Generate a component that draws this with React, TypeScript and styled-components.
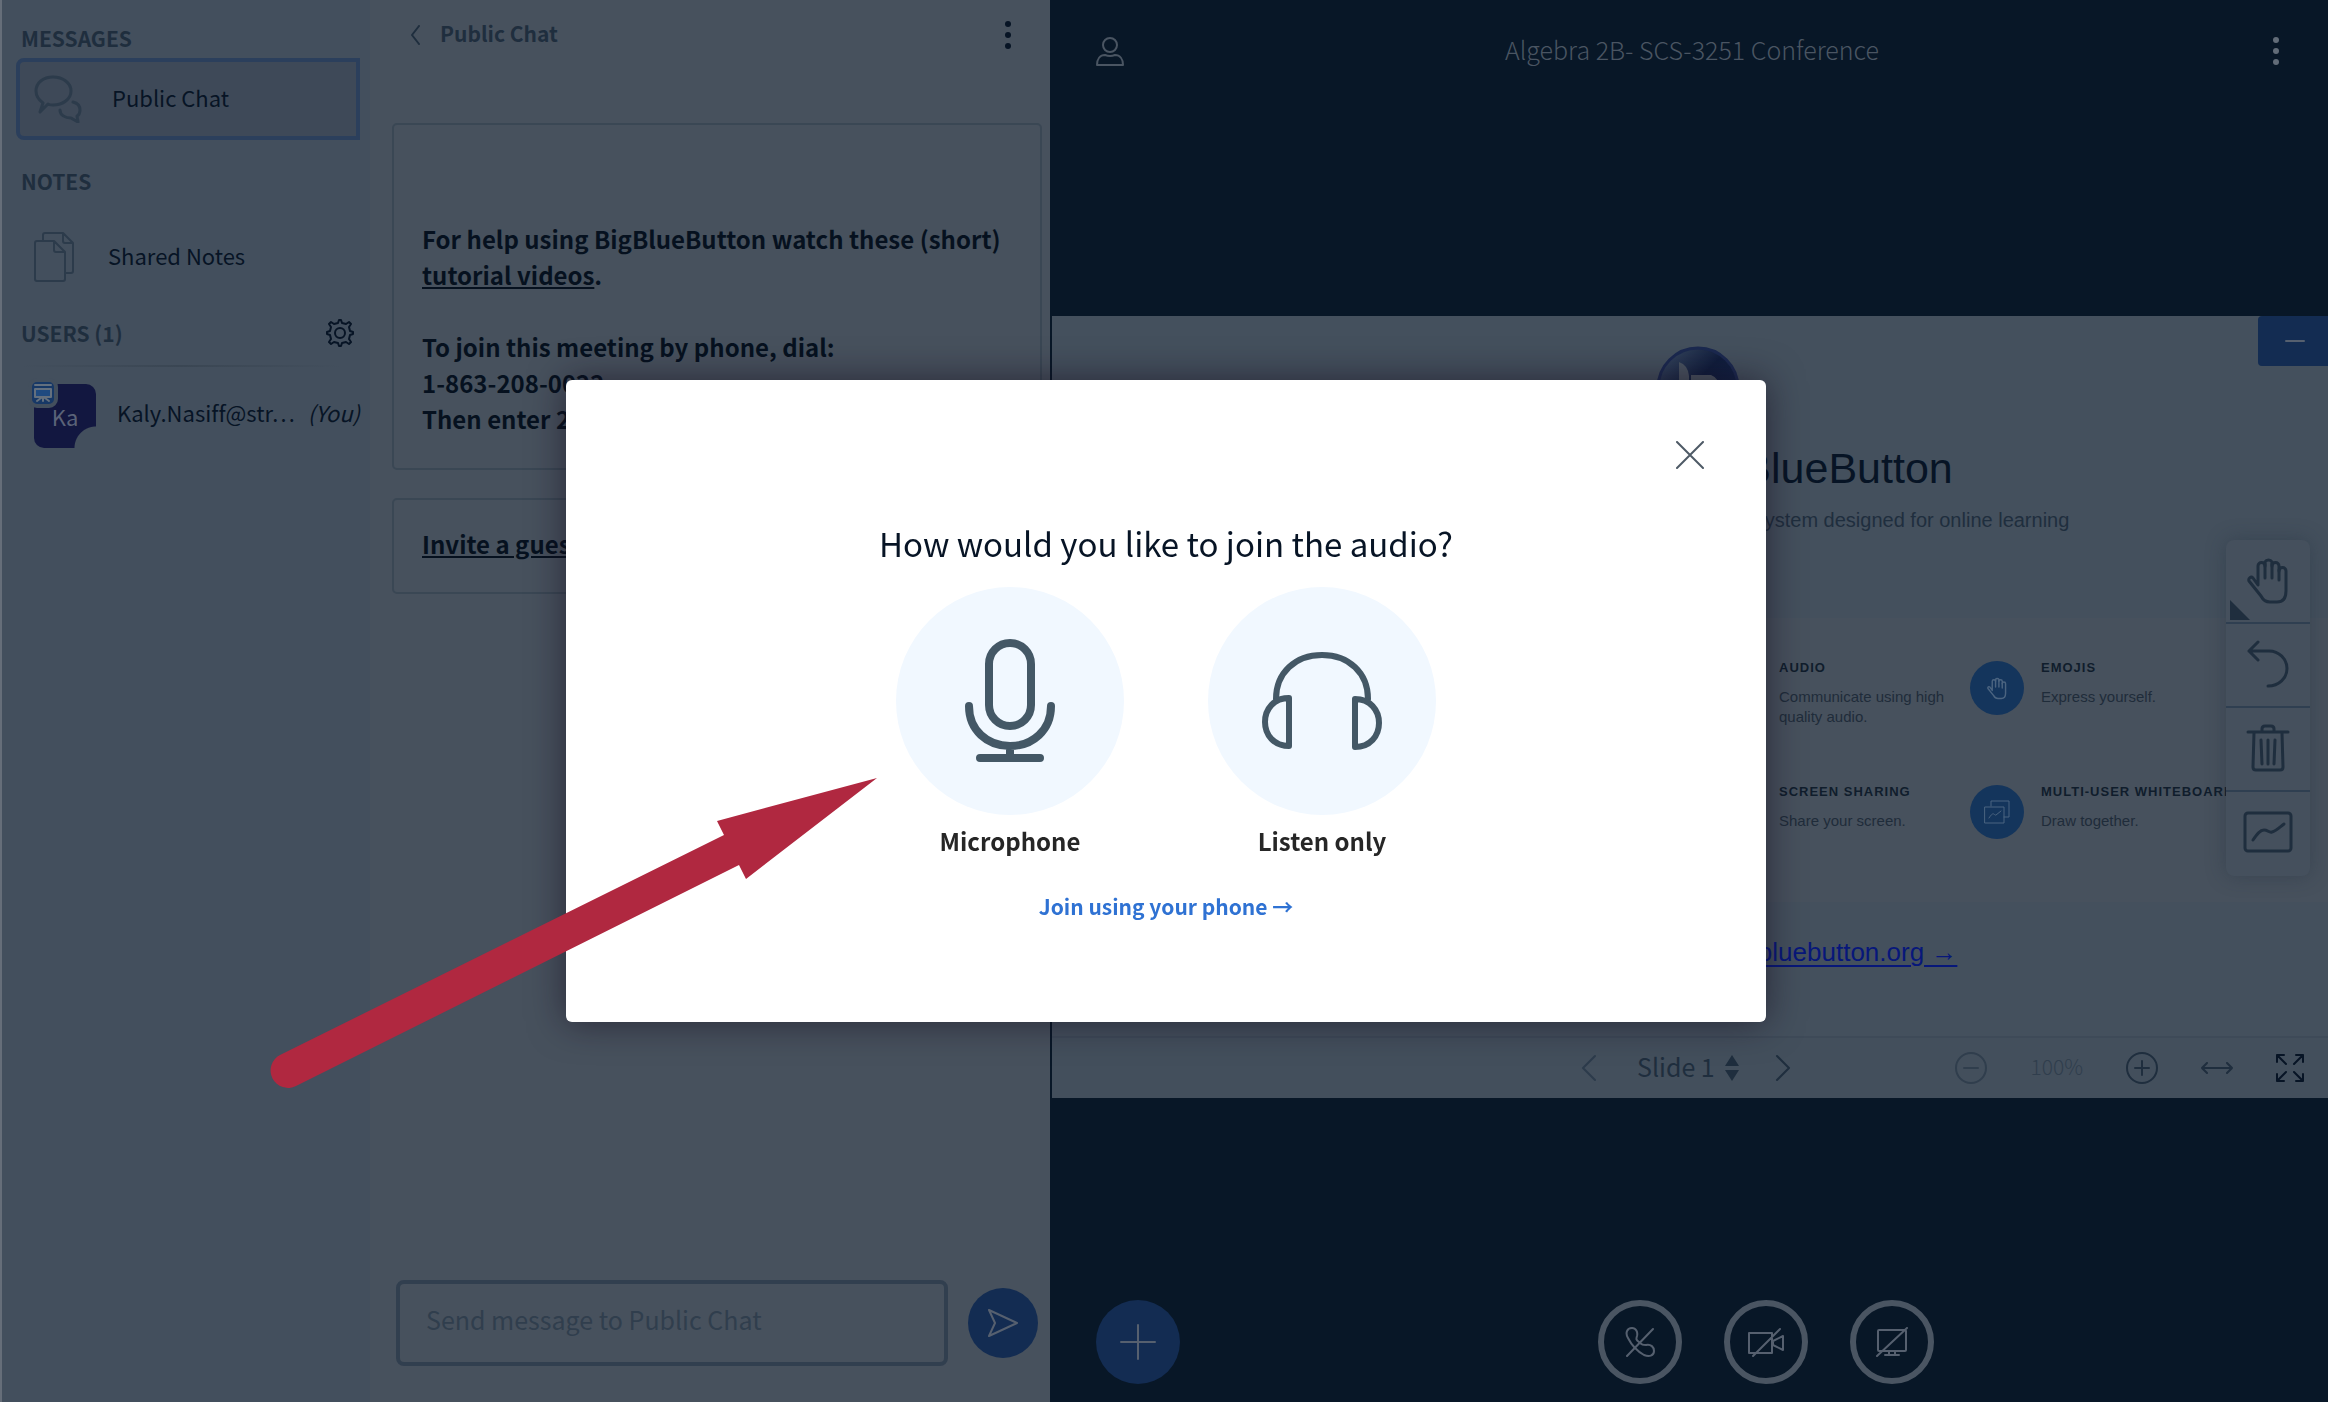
import React from "react";
import styled, { createGlobalStyle } from "styled-components";

const c = {
  dark: "#081727",
  panel: "#47515d",
  sidebar: "#434f5d",
  slide: "#44505d",
  heading: "#1f2e3e",
  ink: "#071425",
  line: "#3a4754",
  muted: "#2c3b4b",
  blue: "#132c52",
  light: "#4a5562",
};

const ui = `"Noto Sans CJK SC", "Noto Sans", sans-serif`;
const doc = `"Liberation Sans", Arial, sans-serif`;

const GlobalStyle = createGlobalStyle`
  *, *::before, *::after { box-sizing: border-box; }
  html, body { margin: 0; height: 100%; overflow: hidden; background: ${c.dark}; }
  #root { height: 100%; }
  button, input, select { font: inherit; color: inherit; }
  button { padding: 0; border: 0; background: none; cursor: pointer; }
  h1, h2, h3, p, ul { margin: 0; padding: 0; font-weight: inherit; font-size: inherit; }
  a { color: inherit; }
`;

const Layout = styled.div`
  display: flex;
  height: 100vh;
  font-family: ${ui};
  font-size: 22px;
  line-height: 28px;
  color: ${c.ink};
  background: ${c.dark};
`;

const Svg = styled.svg<{ $w: number; $h: number; $s?: number }>`
  display: block;
  flex: none;
  width: ${(p) => p.$w}px;
  height: ${(p) => p.$h}px;
  fill: none;
  stroke: currentColor;
  stroke-width: ${(p) => p.$s ?? 2};
  stroke-linecap: round;
  stroke-linejoin: round;
`;

type IconProps = { w: number; h: number; s?: number; children: React.ReactNode };
const Icon = ({ w, h, s, children }: IconProps) => (
  <Svg $w={w} $h={h} $s={s} viewBox={`0 0 ${w} ${h}`} aria-hidden="true">
    {children}
  </Svg>
);

const IconButton = styled.button<{ $color?: string }>`
  display: grid;
  place-items: center;
  color: ${(p) => p.$color ?? c.heading};
`;

/* ---------- Sidebar ---------- */

const Sidebar = styled.nav`
  flex: 0 0 370px;
  padding: 26px 10px 0 19px;
  border-left: 2px solid #666e79;
  background: ${c.sidebar};
`;

const SectionTitle = styled.h2`
  font-size: 21px;
  line-height: 24px;
  font-weight: 600;
  color: ${c.heading};
`;

const SidebarItem = styled.button<{ $active?: boolean }>`
  display: flex;
  align-items: center;
  width: 344px;
  height: 82px;
  margin: ${(p) => (p.$active ? "8px 0 29px -5px" : "23px 0 21px -5px")};
  padding-left: ${(p) => (p.$active ? 14 : 18)}px;
  gap: ${(p) => (p.$active ? 30 : 34)}px;
  text-align: left;
  border: ${(p) => (p.$active ? "4px solid #2b3f5c" : "0")};
  border-radius: 8px 0 0 8px;
  background: ${(p) => (p.$active ? "#3e4958" : "transparent")};
`;

const ItemIcon = styled.span`
  color: ${c.muted};
`;

const ItemLabel = styled.span`
  padding-bottom: 4px;
`;

const UsersHeader = styled.div`
  display: flex;
  align-items: center;
  justify-content: space-between;
  height: 28px;
  padding-right: 6px;
`;

const Rule = styled.hr`
  height: 2px;
  margin: 18px 18px 17px 0;
  border: 0;
  background: linear-gradient(to right, transparent, #3a4653, transparent);
`;

const UserRow = styled.div`
  display: flex;
  align-items: center;
  gap: 21px;
  height: 64px;
  padding-left: 13px;
`;

const Avatar = styled.span`
  position: relative;
  flex: none;
  display: grid;
  place-items: center;
  width: 62px;
  height: 64px;
  border-radius: 10px;
  color: #5a6378;
  background: radial-gradient(circle at 100% 100%, ${c.sidebar} 21px, #121740 22px);
`;

const PresenterBadge = styled.span`
  position: absolute;
  top: -6px;
  left: -6px;
  display: grid;
  place-items: center;
  width: 30px;
  height: 30px;
  border: 4px solid ${c.sidebar};
  border-radius: 9px;
  color: #64707e;
  background: #173866;
`;

const UserName = styled.span`
  flex: 1;
  display: flex;
  justify-content: space-between;
  padding-bottom: 8px;
  white-space: nowrap;
  font-variant-ligatures: none;
`;

/* ---------- Chat ---------- */

const ChatPanel = styled.section`
  flex: 0 0 680px;
  display: flex;
  flex-direction: column;
  padding: 20px 8px 36px 22px;
  background: ${c.panel};
`;

const ChatHeader = styled.header`
  display: flex;
  align-items: center;
  justify-content: space-between;
  height: 30px;
  margin-bottom: 73px;
  padding: 0 30px 0 19px;
`;

const BackButton = styled.button`
  display: flex;
  align-items: center;
  gap: 20px;
  font-size: 21px;
  font-weight: 600;
  color: ${c.heading};
`;

const Card = styled.article<{ $welcome?: boolean }>`
  margin-bottom: 28px;
  padding: ${(p) => (p.$welcome ? "96px 20px 31px 28px" : "26px 20px 30px 28px")};
  border: 2px solid ${c.line};
  border-radius: 5px;
  font-size: 24px;
  line-height: 36px;
  font-weight: 600;
  color: #06111f;

  p + p {
    margin-top: 36px;
  }
`;

const Composer = styled.form`
  display: flex;
  align-items: center;
  gap: 20px;
  margin-top: auto;
  padding: 0 4px;
`;

const MessageInput = styled.input`
  flex: 1;
  min-width: 0;
  height: 86px;
  padding: 0 26px 8px;
  border: 4px solid #313f4f;
  border-radius: 8px;
  font-size: 25px;
  background: transparent;
  outline: none;

  &::placeholder {
    color: #303e4d;
    opacity: 1;
  }
`;

const RoundButton = styled.button<{ $size: number; $outline?: boolean }>`
  flex: none;
  display: grid;
  place-items: center;
  width: ${(p) => p.$size}px;
  height: ${(p) => p.$size}px;
  border: ${(p) => (p.$outline ? `6px solid ${c.light}` : "0")};
  border-radius: 50%;
  color: #56606f;
  background: ${(p) => (p.$outline ? "transparent" : c.blue)};
`;

/* ---------- Main stage ---------- */

const Main = styled.main`
  flex: 1;
  min-width: 0;
  display: flex;
  flex-direction: column;
  padding-left: 2px;
  background: ${c.dark};
`;

const NavBar = styled.header`
  display: grid;
  grid-template-columns: 1fr auto 1fr;
  align-items: center;
  height: 116px;
  padding: 0 48px 14px 44px;
  color: ${c.light};
`;

const NavEnd = styled.div`
  justify-self: end;
`;

const NavStart = styled.div`
  justify-self: start;
`;

const RoomTitle = styled.h1`
  padding: 0 0 4px 8px;
  font-size: 25px;
  font-weight: 300;
`;

const Stage = styled.div`
  flex: 1;
  display: flex;
  flex-direction: column;
  justify-content: center;
`;

const Presentation = styled.section`
  position: relative;
  font-family: ${doc};
  background: ${c.slide};
`;

const SlideHeader = styled.div`
  display: flex;
  flex-direction: column;
  align-items: center;
  height: 302px;
  padding: 30px 0 0 6px;
`;

const Logo = styled.svg`
  width: 84px;
  height: 84px;
  margin: 0 0 12px 10px;
`;

const SlideTitle = styled.h2`
  font-size: 43px;
  line-height: 52px;
  color: ${c.ink};
`;

const SlideSubtitle = styled.p`
  margin-top: 12px;
  padding-right: 20px;
  font-size: 20px;
  line-height: 28px;
  color: ${c.heading};
`;

const FeatureBand = styled.ul`
  display: grid;
  grid-template-columns: 262px 262px;
  justify-content: end;
  align-content: start;
  row-gap: 55px;
  height: 284px;
  padding: 40px 96px 0 0;
  list-style: none;
  background: ${c.panel};
`;

const Feature = styled.li`
  display: flex;
  gap: 17px;
  height: 69px;
`;

const FeatureIcon = styled.span`
  flex: none;
  display: grid;
  place-items: center;
  width: 54px;
  height: 54px;
  margin-top: 3px;
  border-radius: 50%;
  color: #4b6480;
  background: #14355c;
`;

const FeatureTitle = styled.h3`
  margin-bottom: 9px;
  font-size: 13px;
  line-height: 20px;
  font-weight: 700;
  letter-spacing: 1px;
  white-space: nowrap;
  color: #101d2c;
`;

const FeatureText = styled.p`
  font-size: 15px;
  line-height: 20px;
  color: #1f2c3a;
`;

const SlideFooter = styled.p`
  height: 134px;
  padding-top: 34px;
  font-size: 26px;
  line-height: 32px;
  text-align: center;
  color: #07177a;

  a {
    text-decoration-thickness: 2px;
    text-underline-offset: 4px;
  }
`;

const MinimizeButton = styled.button`
  position: absolute;
  top: 0;
  right: 0;
  display: grid;
  place-items: center;
  width: 70px;
  height: 50px;
  padding-left: 4px;
  border-radius: 4px 0 0 4px;
  color: #56606f;
  background: ${c.blue};
`;

const Tools = styled.div`
  position: absolute;
  top: 224px;
  right: 18px;
  display: flex;
  flex-direction: column;
  width: 84px;
  padding-bottom: 2px;
  border-radius: 8px;
  background: #45505d;
  box-shadow: 0 0 20px rgba(30, 42, 56, 0.35);
`;

const Tool = styled.button`
  position: relative;
  display: grid;
  place-items: center;
  height: 82px;
  padding-bottom: 3px;
  color: ${c.heading};

  & + & {
    height: 84px;
    border-top: 2px solid #2f3f51;
  }
`;

const Corner = styled.span`
  position: absolute;
  left: 4px;
  bottom: 2px;
  border: 10px solid transparent;
  border-left-color: ${c.heading};
  border-bottom-color: ${c.heading};
`;

const SlideBar = styled.div`
  display: grid;
  grid-template-columns: 1fr auto 1fr;
  align-items: center;
  height: 62px;
  padding-right: 8px;
  border-top: 2px solid #3e4a58;
  font-family: ${ui};
  background: #434f5c;
`;

const Pager = styled.div`
  grid-column: 2;
  display: flex;
  align-items: center;
  gap: 36px;
`;

const SlidePicker = styled.label`
  display: flex;
  align-items: center;
  gap: 10px;
  padding-left: 4px;
  color: ${c.heading};
`;

const SlideSelect = styled.select`
  appearance: none;
  padding: 0 0 4px;
  border: 0;
  font-size: 25px;
  line-height: 36px;
  background: transparent;
`;

const ZoomControls = styled.div`
  display: flex;
  align-items: center;
  justify-content: flex-end;
  gap: 43px;
  padding-right: 16px;
`;

const ZoomLevel = styled.span`
  padding-bottom: 4px;
  font-size: 21px;
  font-weight: 300;
  color: #303e4d;
`;

const ActionBar = styled.footer`
  display: flex;
  height: 104px;
  padding: 2px 0 18px 44px;
`;

const MediaButtons = styled.div`
  flex: 1;
  display: flex;
  justify-content: center;
  gap: 42px;
  padding-left: 24px;
`;

/* ---------- Audio dialog ---------- */

const Overlay = styled.div`
  position: fixed;
  inset: 0;
  display: grid;
  place-items: center;
  padding-left: 4px;
`;

const Dialog = styled.div`
  position: relative;
  display: flex;
  flex-direction: column;
  align-items: center;
  width: 1200px;
  min-height: 642px;
  padding: 138px 40px 80px;
  border-radius: 6px;
  font-family: ${ui};
  background: #ffffff;
  box-shadow: 0 0 36px rgba(20, 12, 28, 0.6);
`;

const CloseButton = styled.button`
  position: absolute;
  top: 61px;
  right: 62px;
  color: #4e5a66;
`;

const DialogTitle = styled.h2`
  font-size: 33px;
  line-height: 50px;
  color: ${c.ink};
`;

const Choices = styled.div`
  display: flex;
  gap: 84px;
  margin: 19px 0 32px;
`;

const Choice = styled.button`
  display: flex;
  flex-direction: column;
  align-items: center;
  gap: 8px;
  font-size: 24px;
  line-height: 36px;
  font-weight: 600;
  color: #262626;
`;

const ChoiceDisc = styled.span`
  display: grid;
  place-items: center;
  width: 228px;
  height: 228px;
  border-radius: 50%;
  color: #445866;
  background: #f1f8ff;
`;

const PhoneLink = styled.a`
  font-size: 21px;
  line-height: 30px;
  font-weight: 600;
  text-decoration: none;
  color: #2f72d3;
`;

const Pointer = styled.svg`
  position: fixed;
  left: 268px;
  top: 776px;
  width: 612px;
  height: 314px;
  pointer-events: none;
`;

/* ---------- Icons ---------- */

const Dots = () => (
  <Icon w={8} h={30} s={0}>
    {[4, 15, 26].map((y) => (
      <circle key={y} cx="4" cy={y} r="3" fill="currentColor" />
    ))}
  </Icon>
);

const Hand = ({ w, h, s }: { w: number; h: number; s: number }) => (
  <Svg $w={w} $h={h} $s={s} viewBox="0 0 42 48" aria-hidden="true">
    <path d="M11 29V10a3.500 3.500 0 0 1 7 0V6a4 4 0 0 1 7 0v4a3.500 3.500 0 0 1 7 0v5a3.500 3.500 0 0 1 7 0v20c0 7-3 11-9 11h-7c-5 0-7-2-9-6L2 25c-1-3 2-5 4-3z" />
    <path d="M18 8v14M25 8v14M32 14v10" />
  </Svg>
);

const Chart = () => (
  <Icon w={50} h={42} s={3}>
    <rect x="2" y="2" width="46" height="38" rx="3" />
    <path d="M10 29c4-6 7-10 11-10 4 0 5 3 8 2 4-1 8-5 12-8" />
  </Icon>
);

export default function App() {
  return (
    <>
      <GlobalStyle />
      <Layout>
        <Sidebar>
          <SectionTitle>MESSAGES</SectionTitle>
          <SidebarItem $active>
            <ItemIcon>
              <Icon w={48} h={48} s={3}>
                <path d="M6 37l3-9C5 25 2 21 2 16 2 8 9 2 19 2s18 6 18 14-8 14-18 14c-2 0-4 0-5-1z" />
                <path d="M39 27c4 1 7 4 7 8 0 3-1 5-3 6l1 6-7-4c-6 0-11-3-11-8" />
              </Icon>
            </ItemIcon>
            <ItemLabel>Public Chat</ItemLabel>
          </SidebarItem>
          <SectionTitle>NOTES</SectionTitle>
          <SidebarItem>
            <ItemIcon>
              <Icon w={40} h={50}>
                <path d="M9 9V3q0-2 2-2h18l10 10v28q0 2-2 2h-6M29 1v8q0 2 2 2h8" />
                <path d="M3 9h17l11 11v27q0 2-2 2H3q-2 0-2-2V11q0-2 2-2zM20 9v9q0 2 2 2h9" />
              </Icon>
            </ItemIcon>
            <ItemLabel>Shared Notes</ItemLabel>
          </SidebarItem>
          <UsersHeader>
            <SectionTitle>USERS (1)</SectionTitle>
            <IconButton aria-label="Manage users" $color={c.ink}>
              <Icon w={28} h={28}>
                <circle cx="14" cy="14" r="5" />
                <path d="M12 4l1-3h2l1 3 4 1 3-2 2 2-2 3 1 4 3 1v2l-3 1-1 4 2 3-2 2-3-2-4 1-1 3h-2l-1-3-4-1-3 2-2-2 2-3-1-4-3-1v-2l3-1 1-4-2-3 2-2 3 2z" />
              </Icon>
            </IconButton>
          </UsersHeader>
          <Rule />
          <UserRow>
            <Avatar>
              Ka
              <PresenterBadge>
                <Icon w={20} h={20}>
                  <path d="M2 2h16" />
                  <path d="M2 6h16v8H2z" fill="#1f4a80" />
                  <path d="M10 15v3M8 15l-4 3M12 15l4 3" />
                </Icon>
              </PresenterBadge>
            </Avatar>
            <UserName>
              <span>Kaly.Nasiff@str…</span>
              <em>(You)</em>
            </UserName>
          </UserRow>
        </Sidebar>

        <ChatPanel>
          <ChatHeader>
            <BackButton>
              <Icon w={9} h={20}>
                <path d="M8 1L1 10l7 9" />
              </Icon>
              <ItemLabel>Public Chat</ItemLabel>
            </BackButton>
            <IconButton aria-label="Chat options" $color={c.ink}>
              <Dots />
            </IconButton>
          </ChatHeader>
          <Card $welcome>
            <p>
              For help using BigBlueButton watch these (short)
              <br />
              <a href="#tutorials">tutorial videos</a>.
            </p>
            <p>
              To join this meeting by phone, dial:
              <br />
              1-863-208-0022
              <br />
              Then enter 2
            </p>
          </Card>
          <Card>
            <a href="#invite">Invite a guest</a>
          </Card>
          <Composer>
            <MessageInput aria-label="Send message to Public Chat" placeholder="Send message to Public Chat" />
            <RoundButton type="button" $size={70} aria-label="Send message">
              <Icon w={32} h={28}>
                <path d="M2 1l28 13L2 27l6-13z" />
              </Icon>
            </RoundButton>
          </Composer>
        </ChatPanel>

        <Main>
          <NavBar>
            <NavStart>
              <IconButton aria-label="Toggle user list" $color={c.light}>
                <Icon w={28} h={30}>
                  <circle cx="14" cy="9" r="7" />
                  <path d="M1 29c0-6 3-10 8-10q5 2 10 0c5 0 8 4 8 10z" />
                </Icon>
              </IconButton>
            </NavStart>
            <RoomTitle>Algebra 2B- SCS-3251 Conference</RoomTitle>
            <NavEnd>
              <IconButton aria-label="Options" $color="#626c78">
                <Dots />
              </IconButton>
            </NavEnd>
          </NavBar>

          <Stage>
            <Presentation>
              <SlideHeader>
                <Logo viewBox="0 0 84 84" aria-hidden="true">
                  <defs>
                    <linearGradient id="orb" x1="0" y1="0" x2="1" y2="1">
                      <stop offset="0.1" stopColor="#33435c" />
                      <stop offset="0.45" stopColor="#101d3c" />
                      <stop offset="1" stopColor="#13254d" />
                    </linearGradient>
                  </defs>
                  <circle cx="42" cy="42" r="40" fill="url(#orb)" stroke="#1b2950" strokeWidth="3" />
                  <path d="M23 62V16q9 3 10 14v32z" fill="#4a5460" />
                  <path d="M35 29h20q8 3 9 14v19H35V38z" fill="#4a5460" />
                </Logo>
                <SlideTitle>Welcome To BigBlueButton</SlideTitle>
                <SlideSubtitle>
                  BigBlueButton is an open source web conferencing system designed for online learning
                </SlideSubtitle>
              </SlideHeader>
              <FeatureBand>
                <Feature>
                  <FeatureIcon />
                  <div>
                    <FeatureTitle>AUDIO</FeatureTitle>
                    <FeatureText>Communicate using high quality audio.</FeatureText>
                  </div>
                </Feature>
                <Feature>
                  <FeatureIcon>
                    <Hand w={20} h={24} s={3} />
                  </FeatureIcon>
                  <div>
                    <FeatureTitle>EMOJIS</FeatureTitle>
                    <FeatureText>Express yourself.</FeatureText>
                  </div>
                </Feature>
                <Feature>
                  <FeatureIcon />
                  <div>
                    <FeatureTitle>SCREEN SHARING</FeatureTitle>
                    <FeatureText>Share your screen.</FeatureText>
                  </div>
                </Feature>
                <Feature>
                  <FeatureIcon>
                    <Icon w={26} h={24} s={1}>
                      <path d="M7 6V1h18v16h-5M1 7h19v16H1zM5 18c5-8 5-2 7-3l5-4" />
                    </Icon>
                  </FeatureIcon>
                  <div>
                    <FeatureTitle>MULTI-USER WHITEBOARD</FeatureTitle>
                    <FeatureText>Draw together.</FeatureText>
                  </div>
                </Feature>
              </FeatureBand>
              <SlideFooter>
                For more information visit <a href="#bigbluebutton">bigbluebutton.org →</a>
              </SlideFooter>
              <MinimizeButton aria-label="Minimize presentation">
                <Icon w={20} h={4}>
                  <path d="M1 2h18" />
                </Icon>
              </MinimizeButton>
              <Tools>
                <Tool aria-label="Pan">
                  <Hand w={42} h={48} s={3} />
                  <Corner />
                </Tool>
                <Tool aria-label="Undo">
                  <Icon w={42} h={48} s={3}>
                    <path d="M11 2L2 11l9 9M2 11h20c10 0 18 8 18 17.500S32 46 21 46" />
                  </Icon>
                </Tool>
                <Tool aria-label="Clear annotations">
                  <Icon w={44} h={48} s={3}>
                    <path d="M2 8h40M16 8V5q0-3 3-3h6q3 0 3 3v3M8 9l-1 34q0 3 3 3h24q3 0 3-3L36 9" />
                    <path d="M15 16l1 24M22 16v24M29 16l-1 24" />
                  </Icon>
                </Tool>
                <Tool aria-label="Multi-user whiteboard">
                  <Chart />
                </Tool>
              </Tools>
              <SlideBar>
                <Pager>
                  <IconButton aria-label="Previous slide" $color={c.muted}>
                    <Icon w={16} h={28}>
                      <path d="M14 2L2 14l12 12" />
                    </Icon>
                  </IconButton>
                  <SlidePicker>
                    <SlideSelect aria-label="Select slide">
                      <option>Slide 1</option>
                    </SlideSelect>
                    <Icon w={14} h={26} s={0}>
                      <path d="M7 0l7 11H0zM7 26L0 15h14z" fill="currentColor" />
                    </Icon>
                  </SlidePicker>
                  <IconButton aria-label="Next slide">
                    <Icon w={16} h={28}>
                      <path d="M2 2l12 12L2 26" />
                    </Icon>
                  </IconButton>
                </Pager>
                <ZoomControls>
                  <IconButton aria-label="Zoom out" $color="#303e4d">
                    <Icon w={32} h={32}>
                      <path d="M9 16h14" />
                      <circle cx="16" cy="16" r="15" />
                    </Icon>
                  </IconButton>
                  <ZoomLevel>100%</ZoomLevel>
                  <IconButton aria-label="Zoom in">
                    <Icon w={32} h={32}>
                      <path d="M9 16h14M16 9v14" />
                      <circle cx="16" cy="16" r="15" />
                    </Icon>
                  </IconButton>
                  <IconButton aria-label="Fit to width">
                    <Icon w={32} h={12}>
                      <path d="M1 6h30M6 1L1 6l5 5M26 1l5 5-5 5" />
                    </Icon>
                  </IconButton>
                  <IconButton aria-label="Fullscreen" $color={c.ink}>
                    <Icon w={28} h={28}>
                      <path d="M1 8V1h7M1 1l9 9M20 1h7v7M27 1l-9 9M1 20v7h7M1 27l9-9M20 27h7v-7M27 27l-9-9" />
                    </Icon>
                  </IconButton>
                </ZoomControls>
              </SlideBar>
            </Presentation>
          </Stage>

          <ActionBar>
            <RoundButton $size={84} aria-label="Actions">
              <Icon w={36} h={36}>
                <path d="M1 18h34M18 1v34" />
              </Icon>
            </RoundButton>
            <MediaButtons>
              <RoundButton $size={84} $outline aria-label="Join audio">
                <Icon w={30} h={30}>
                  <path d="M2 29L28 2" />
                  <path d="M3 11C0 6 2 1 7 1c4 0 6 4 5 8-1 3-1 4 2 6 3 3 4 3 7 3 5-1 8 2 8 6 0 5-5 6-10 4C12 24 6 17 3 11z" />
                </Icon>
              </RoundButton>
              <RoundButton $size={84} $outline aria-label="Share webcam">
                <Icon w={38} h={30}>
                  <path d="M2 6h23v20H2zM26 14l10-5v14l-10-5zM6 29L33 2" />
                </Icon>
              </RoundButton>
              <RoundButton $size={84} $outline aria-label="Share screen">
                <Icon w={32} h={30}>
                  <path d="M3 3h26q1 0 1 1v19q0 1-1 1H3q-1 0-1-1V4q0-1 1-1zM13 24v4M19 24v4M9 28h14M1 29L31 1" />
                </Icon>
              </RoundButton>
            </MediaButtons>
          </ActionBar>
        </Main>
      </Layout>

      <Overlay>
        <Dialog role="dialog" aria-labelledby="audio-title">
          <CloseButton aria-label="Close">
            <Icon w={28} h={28}>
              <path d="M1 1l26 26M27 1L1 27" />
            </Icon>
          </CloseButton>
          <DialogTitle id="audio-title">How would you like to join the audio?</DialogTitle>
          <Choices>
            <Choice>
              <ChoiceDisc>
                <Icon w={90} h={124} s={8}>
                  <rect x="24" y="4" width="42" height="83" rx="21" />
                  <path d="M4 67c0 24 18 40 41 40s41-16 41-40M45 107v12M15 119h60" />
                </Icon>
              </ChoiceDisc>
              Microphone
            </Choice>
            <Choice>
              <ChoiceDisc>
                <Icon w={120} h={98} s={6}>
                  <path d="M14 47C14 21 33 3 60 3s46 18 46 44" />
                  <path d="M27 46C12 46 3 57 3 70s9 24 24 24zM93 47c15 0 24 11 24 24s-9 24-24 24z" />
                </Icon>
              </ChoiceDisc>
              Listen only
            </Choice>
          </Choices>
          <PhoneLink href="#phone">Join using your phone →</PhoneLink>
        </Dialog>
      </Overlay>

      <Pointer viewBox="268 776 612 314" aria-hidden="true">
        <path
          d="M877 778L717 821l7 14L280 1055a17 17 0 0 0 16 31L739 865l7 14z"
          fill="#b02840"
        />
      </Pointer>
    </>
  );
}
